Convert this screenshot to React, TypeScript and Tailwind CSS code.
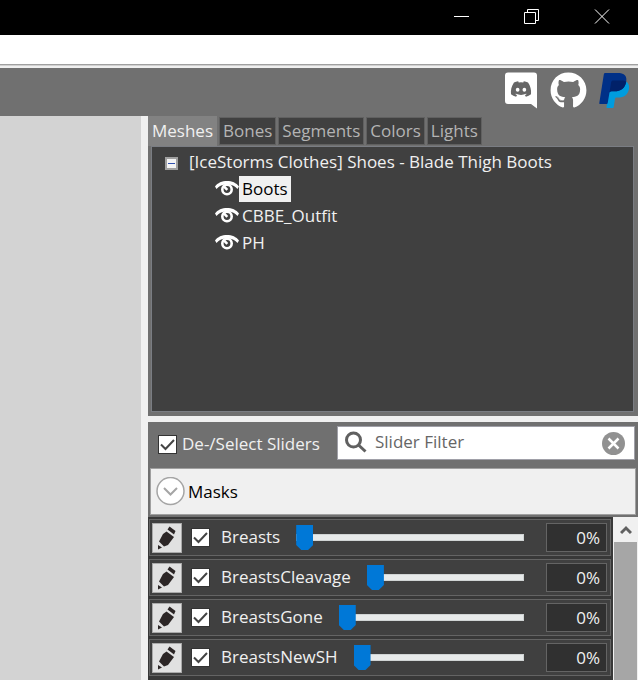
import { FaDiscord, FaGithub } from "react-icons/fa";

const tabs = ["Meshes", "Bones", "Segments", "Colors", "Lights"];
const shapes = ["Boots", "CBBE_Outfit", "PH"];
const sliders = ["Breasts", "BreastsCleavage", "BreastsGone", "BreastsNewSH"];

function TitleBar() {
  const button = "flex h-full w-[70px] items-center justify-center";
  return (
    <header className="flex h-[35px] shrink-0 justify-end bg-black pr-px text-white">
      <button className={button} aria-label="Minimize">
        <svg width="16" height="18" stroke="currentColor"><path d="M0 7.5h15" /></svg>
      </button>
      <button className={button} aria-label="Restore">
        <svg width="16" height="18" fill="none" stroke="currentColor">
          <path d="M.5 3.5h11v11H.5zM3.5 3.5v-3h11v11h-3" />
        </svg>
      </button>
      <button className={button} aria-label="Close">
        <svg width="16" height="18" stroke="currentColor"><path d="M1 .5l14 14M15 .5l-14 14" /></svg>
      </button>
    </header>
  );
}

function Toolbar() {
  return (
    <div className="flex h-[48px] shrink-0 justify-end gap-3 bg-[#707070] pt-1 pr-2">
      <a href="#discord" aria-label="Discord" className="relative h-9 w-[33px]">
        <svg width="33" height="37" viewBox="0 0 33 37" fill="#fff">
          <path d="M3 .5h26a3 3 0 0 1 3 3V36.500l-6-4.500H3a3 3 0 0 1-3-3V3.500a3 3 0 0 1 3-3z" />
        </svg>
        <FaDiscord className="absolute top-[6px] left-[5px] text-[22px] text-[#666]" />
      </a>
      <a href="#github" aria-label="GitHub" className="h-9 w-[37px]">
        <FaGithub className="text-[37px] text-white" />
      </a>
      <a href="#paypal" aria-label="PayPal" className="h-9 w-[31px]">
        <svg width="31" height="37" viewBox="0 0 31 37">
          <path fill="#009cde" d="M27 9.500c3 2 3.500 4.500 3 7.500-1.200 6-5 8.500-11 8.500h-1.500c-.8 0-1.300.5-1.500 1.200L14.700 35c-.1.700-.6 1-1.200 1H8.300c-.6 0-.9-.4-.8-1L10 18z" />
          <path fill="#003087" d="M6.500 1h12c3 0 6 .6 7.600 2.600C27.400 5.200 27.600 7 27.200 9.700c-1.200 6.800-5.500 9.600-11.700 9.600h-3c-1.200 0-1.900.7-2.100 1.800L8.700 31c-.1.700-.6 1.100-1.300 1.100H1.200c-.7 0-1-.4-.9-1L4.800 2.400C5 1.500 5.600 1 6.500 1z" />
          <path fill="#012169" d="M27.200 9.700c-1.200 6.800-5.500 9.600-11.700 9.600h-3c-1.200 0-1.900.7-2.100 1.800l1.800-11c.2-1 .9-1.600 1.900-1.600h9.100c1.500 0 3 .4 4 1.200z" />
        </svg>
      </a>
    </div>
  );
}

function Eye() {
  return (
    <svg width="24" height="17" viewBox="0 0 24 17" fill="none" stroke="#fff">
      <path d="M0 6.500C5-.8 19-.8 24 6.500L22.500 9C20 6.500 18 5.200 15 4.800H9C6 5.200 4 6.500 1.500 9z" fill="#fff" stroke="none" />
      <circle cx="12" cy="9.500" r="4.700" strokeWidth="2.600" />
      <path d="M12.300 9.800L9 6.500" strokeWidth="2.500" />
    </svg>
  );
}

function MeshPanel() {
  return (
    <section className="bg-[#707070] pr-1 pb-1">
      <div role="tablist" className="flex h-[30px] gap-[2px]">
        {tabs.map((tab, i) => (
          <button
            key={tab}
            role="tab"
            aria-selected={i === 0}
            className={i === 0
              ? "bg-[#828282] px-1 text-[#f0f0f0]"
              : "mt-px mb-px border border-[#606060] bg-[#404040] px-[3px] text-[#b4b4b4]"}
          >
            {tab}
          </button>
        ))}
      </div>
      <div className="ml-[3px] h-[266px] border border-[#7a7d83] bg-[#404040] pt-px pl-px text-[#f0f0f0]">
        <div className="flex h-[27px] items-center pl-3">
          <button aria-label="Collapse" className="mt-1 mr-[11px] flex size-[13px] items-center justify-center border-2 border-[#a0a0a0] bg-[#f4f4f4]">
            <span className="h-px w-[7px] bg-[#3050b0]" />
          </button>
          <span>[IceStorms Clothes] Shoes - Blade Thigh Boots</span>
        </div>
        <ul className="pl-[62px]">
          {shapes.map((shape, i) => (
            <li key={shape} className="flex h-[27px] items-center">
              <Eye />
              <span className={i === 0 ? "bg-[#f0f0f0] px-[3px] text-black" : "px-[3px]"}>{shape}</span>
            </li>
          ))}
        </ul>
      </div>
    </section>
  );
}

function Tick({ id, label }: { id: string; label?: string }) {
  return (
    <span className="relative size-[19px] shrink-0">
      <input
        id={id}
        type="checkbox"
        defaultChecked
        aria-label={label}
        className="peer block size-[19px] appearance-none border border-[#333] bg-white"
      />
      <svg viewBox="0 0 19 19" className="pointer-events-none absolute inset-0 hidden peer-checked:block" fill="none" stroke="#444" strokeWidth="2">
        <path d="M3 9.500l4.500 4.500L16 5" />
      </svg>
    </span>
  );
}

function SliderFilter() {
  return (
    <div className="flex h-[46px] items-start pt-1 pr-[3px] pl-[10px]">
      <div className="mt-[5px] flex items-center gap-[5px] text-[#f0f0f0]">
        <Tick id="select-all" />
        <label htmlFor="select-all">De-/Select Sliders</label>
      </div>
      <div className="ml-auto flex h-[34px] w-[298px] items-center border border-[#a0a0a8] bg-white pr-[9px] pl-[7px]">
        <svg width="22" height="24" fill="none" stroke="#606060" strokeWidth="3">
          <circle cx="8.500" cy="9" r="7" />
          <path d="M13.500 14l7 6.500" />
        </svg>
        <input
          type="text"
          aria-label="Slider Filter"
          placeholder="Slider Filter"
          className="ml-2 h-full min-w-0 flex-1 pb-1 outline-none placeholder:text-[#666]"
        />
        <button aria-label="Clear filter">
          <svg width="23" height="23">
            <circle cx="11.500" cy="11.500" r="11.500" fill="#919191" />
            <path d="M6.500 6.500l10 10M16.500 6.500l-10 10" stroke="#fff" strokeWidth="2.500" />
          </svg>
        </button>
      </div>
    </div>
  );
}

function Pencil() {
  return (
    <svg width="28" height="28" viewBox="1 1 28 28" fill="#2c2626">
      <path d="M14.500 8.500l7.500 5.500-6 8-4 1.500-5-5L11 11z" />
      <path d="M15.500 6.500L17.500 3.500l6 4.500-1.500 3.500z" />
      <path d="M6 22l4 2.500-4 2z" />
    </svg>
  );
}

function SliderRow({ name }: { name: string }) {
  return (
    <div className="flex h-[37px] shrink-0 items-center border border-[#646464] bg-[#404040] pr-[3px] pl-[2px] text-[#f0f0f0]">
      <button aria-label={"Edit " + name} className="flex h-[30px] w-[30px] shrink-0 items-center justify-center border border-[#aaa] bg-[#e1e1e1]">
        <Pencil />
      </button>
      <span className="mr-[11px] ml-[9px] flex">
        <Tick id={"check-" + name} label={"Enable " + name} />
      </span>
      <label htmlFor={"range-" + name} className="pb-[2px]">{name}</label>
      <input
        id={"range-" + name}
        type="range"
        defaultValue={0}
        className="mr-[22px] ml-4 h-[25px] min-w-0 flex-1 appearance-none bg-transparent [&::-webkit-slider-runnable-track]:h-[7px] [&::-webkit-slider-runnable-track]:border [&::-webkit-slider-runnable-track]:border-[#d0d4d4] [&::-webkit-slider-runnable-track]:bg-[#e7eaea] [&::-webkit-slider-thumb]:-mt-[10px] [&::-webkit-slider-thumb]:-ml-px [&::-webkit-slider-thumb]:h-[25px] [&::-webkit-slider-thumb]:w-[17px] [&::-webkit-slider-thumb]:appearance-none [&::-webkit-slider-thumb]:bg-[#0078d7] [&::-webkit-slider-thumb]:[clip-path:polygon(0_0,100%_0,100%_80%,70%_100%,30%_100%,0_80%)]"
      />
      <input
        type="text"
        defaultValue="0%"
        aria-label={name + " value"}
        className="h-[29px] w-[61px] border border-[#646464] bg-[#303030] pr-[6px] text-right"
      />
    </div>
  );
}

function SliderPanel() {
  return (
    <section className="flex min-h-0 flex-1 flex-col bg-[#707070]">
      <SliderFilter />
      <div className="mr-[2px] ml-[2px] flex h-[47px] shrink-0 items-center border border-[#a0a0a0] bg-[#f0f0f0] pl-[5px]">
        <button className="flex items-center gap-[3px] text-black">
          <svg width="29" height="30" fill="#fff" stroke="#a5a5a5">
            <circle cx="14.500" cy="14" r="13.500" strokeWidth="1.500" />
            <path d="M8 11l6.500 6.500L21 11" fill="none" strokeWidth="2" />
          </svg>
          Masks
        </button>
      </div>
      <div className="mt-[2px] flex min-h-0 flex-1">
        <div className="flex min-w-0 flex-1 flex-col gap-[3px] overflow-hidden bg-[#383838] pt-[2px] pr-[2px] pl-px">
          {sliders.map((name) => (
            <SliderRow key={name} name={name} />
          ))}
        </div>
        <div className="flex w-[25px] flex-col border-r border-l border-[#f0f0f0] bg-[#f0f0f0]">
          <button aria-label="Scroll up" className="flex h-[25px] items-center justify-center">
            <svg width="12" height="10" fill="none" stroke="#606060" strokeWidth="3"><path d="M1 8l5-5 5 5" /></svg>
          </button>
          <div className="flex-1 bg-[#a6a6a6]" />
        </div>
      </div>
    </section>
  );
}

function App() {
  return (
    <div className="flex h-screen flex-col overflow-hidden bg-white font-['Open_Sans',sans-serif] text-[17px] leading-[26px]">
      <TitleBar />
      <div className="mt-[29px] h-1 shrink-0 border-t border-b-2 border-t-[#a0a0a0] border-b-[#f0f0f0] bg-[#d0d0d0]" />
      <Toolbar />
      <main className="flex min-h-0 flex-1">
        <div className="flex-1 bg-[#d3d3d3]" />
        <div className="flex w-[497px] flex-col border-l-[7px] border-[#f0f0f0]">
          <MeshPanel />
          <div className="h-[6px] shrink-0 bg-[#f0f0f0]" />
          <SliderPanel />
        </div>
      </main>
    </div>
  );
}

export default App;
